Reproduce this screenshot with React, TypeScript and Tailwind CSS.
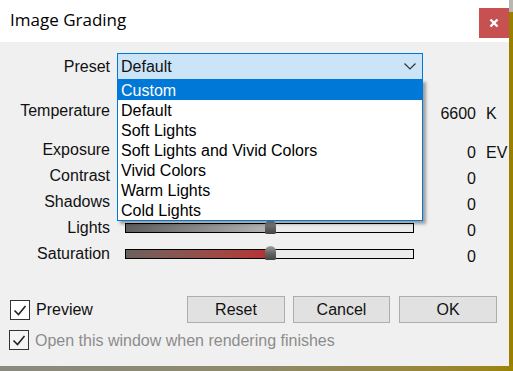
import React from "react";

const Check = () => (
  <svg width="18" height="18" viewBox="0 0 18 18" className="block">
    <path d="M3.5 9.5 L7.5 13.5 L14.5 5" fill="none" stroke="#222" strokeWidth="1.6" />
  </svg>
);

const Slider = ({ fill }: { fill: string }) => (
  <div className="relative w-[289px] h-[10px] border border-black bg-[#ececec]">
    <div className={"h-full w-[140px] " + fill} />
    <div className="absolute left-[139px] top-[-4px] w-[11px] h-[14px] rounded-t-[6px] rounded-b-[2px] bg-linear-to-b from-[#a0a0a0] via-[#666] to-[#444]" />
  </div>
);

const Row = ({
  label,
  value,
  unit,
  fill,
  extra,
}: {
  label: string;
  value: string;
  unit?: string;
  fill: string;
  extra?: string;
}) => (
  <div className={"flex items-center h-[26px] " + (extra ?? "")}>
    <div className="w-[110px] text-right">{label}</div>
    <div className="ml-[15px]">
      <Slider fill={fill} />
    </div>
    <div className="w-[62px] text-right mt-[6px]">{value}</div>
    <div className="ml-[10px] mt-[6px]">{unit ?? ""}</div>
  </div>
);

const items = [
  "Custom",
  "Default",
  "Soft Lights",
  "Soft Lights and Vivid Colors",
  "Vivid Colors",
  "Warm Lights",
  "Cold Lights",
];

export default function App() {
  return (
    <div className="w-[513px] h-[371px] overflow-hidden flex flex-col bg-[#9a7f00]">
      <div className="flex">
        <div
          className="w-[509px] h-[366px] flex flex-col bg-[#f0f0f0] text-[#111] text-[16px] leading-none"
          style={{ fontFamily: '"Liberation Sans", Arial, sans-serif' }}
        >
          <div className="h-[42px] bg-white flex items-start justify-between">
            <div
              className="pl-[10px] pt-[11px] text-[17px] text-black"
              style={{ fontFamily: '"Open Sans", "Noto Sans", sans-serif' }}
            >
              Image Grading
            </div>
            <div className="mt-[8px] w-[30px] h-[30px] bg-[#c75050] flex items-center justify-center">
              <svg width="10" height="10" viewBox="0 0 10 10">
                <path d="M1.5 1.5 L8.5 8.5 M8.5 1.5 L1.5 8.5" stroke="white" strokeWidth="2.4" />
              </svg>
            </div>
          </div>

          <div className="flex flex-col pt-[11px]">
            <div className="flex items-center h-[27px]">
              <div className="w-[110px] text-right">Preset</div>
              <div className="relative ml-[7px] w-[306px] h-[27px] border border-[#0078d7] bg-[#cce4f7] flex items-center justify-between pl-[3px] pr-[6px]">
                <span className="pt-[1px]">Default</span>
                <svg width="12" height="7" viewBox="0 0 12 7">
                  <path d="M0.5 0.5 L6 6 L11.5 0.5" fill="none" stroke="#333" strokeWidth="1.2" />
                </svg>
                <div className="absolute left-[-1px] top-full w-[306px] border border-[#0078d7] bg-white shadow-[3px_3px_3px_rgba(0,0,0,0.35)] z-10 flex flex-col">
                  {items.map((it, i) => (
                    <div
                      key={it}
                      className={
                        "h-[20px] flex items-center pl-[3px] pt-[2px] " +
                        (i === 0 ? "bg-[#0078d7] text-white" : "text-black")
                      }
                    >
                      {it}
                    </div>
                  ))}
                </div>
              </div>
            </div>

            <Row
              label="Temperature"
              value="6600"
              unit="K"
              extra="mt-[18px]"
              fill="bg-linear-to-r from-[#3060c0] to-[#e0e0e0]"
            />
            <Row
              label="Exposure"
              value="0"
              unit="EV"
              extra="mt-[13px]"
              fill="bg-linear-to-r from-[#202020] to-[#d0d0d0]"
            />
            <Row label="Contrast" value="0" fill="bg-linear-to-r from-[#666] to-[#b0b0b0]" />
            <Row label="Shadows" value="0" fill="bg-linear-to-r from-[#666] to-[#b0b0b0]" />
            <Row label="Lights" value="0" fill="bg-linear-to-r from-[#5e5e5e] to-[#b4b4b4]" />
            <Row
              label="Saturation"
              value="0"
              fill="bg-linear-to-r from-[#6a6060] to-[#b53333]"
            />

            <div className="flex items-center h-[27px] mt-[29px]">
              <div className="ml-[10px] w-[20px] h-[20px] border border-[#333] bg-white flex items-center justify-center">
                <Check />
              </div>
              <div className="ml-[6px] w-[151px] pt-[1px]">Preview</div>
              <div className="w-[98px] h-[27px] border border-[#adadad] bg-[#e1e1e1] flex items-center justify-center pt-[1px]">
                Reset
              </div>
              <div className="ml-[8px] w-[97px] h-[27px] border border-[#adadad] bg-[#e1e1e1] flex items-center justify-center pt-[1px]">
                Cancel
              </div>
              <div className="ml-[9px] w-[98px] h-[27px] border border-[#adadad] bg-[#e1e1e1] flex items-center justify-center pt-[1px]">
                OK
              </div>
            </div>

            <div className="flex items-center mt-[7px]">
              <div className="ml-[9px] w-[20px] h-[20px] border border-[#333] bg-[#f4f4f4] flex items-center justify-center">
                <Check />
              </div>
              <div className="ml-[6px] pt-[1px] text-[#8c8c8c]">Open this window when rendering finishes</div>
            </div>
          </div>
        </div>
        <div className="flex-1 flex flex-col">
          <div className="h-[12px] bg-[#b8b8b0]" />
          <div className="flex-1 bg-[#9a7e00]" />
        </div>
      </div>
      <div className="flex-1 bg-linear-to-r from-[#8a8a80] via-[#8e8a6a] to-[#9c8400]" />
    </div>
  );
}
